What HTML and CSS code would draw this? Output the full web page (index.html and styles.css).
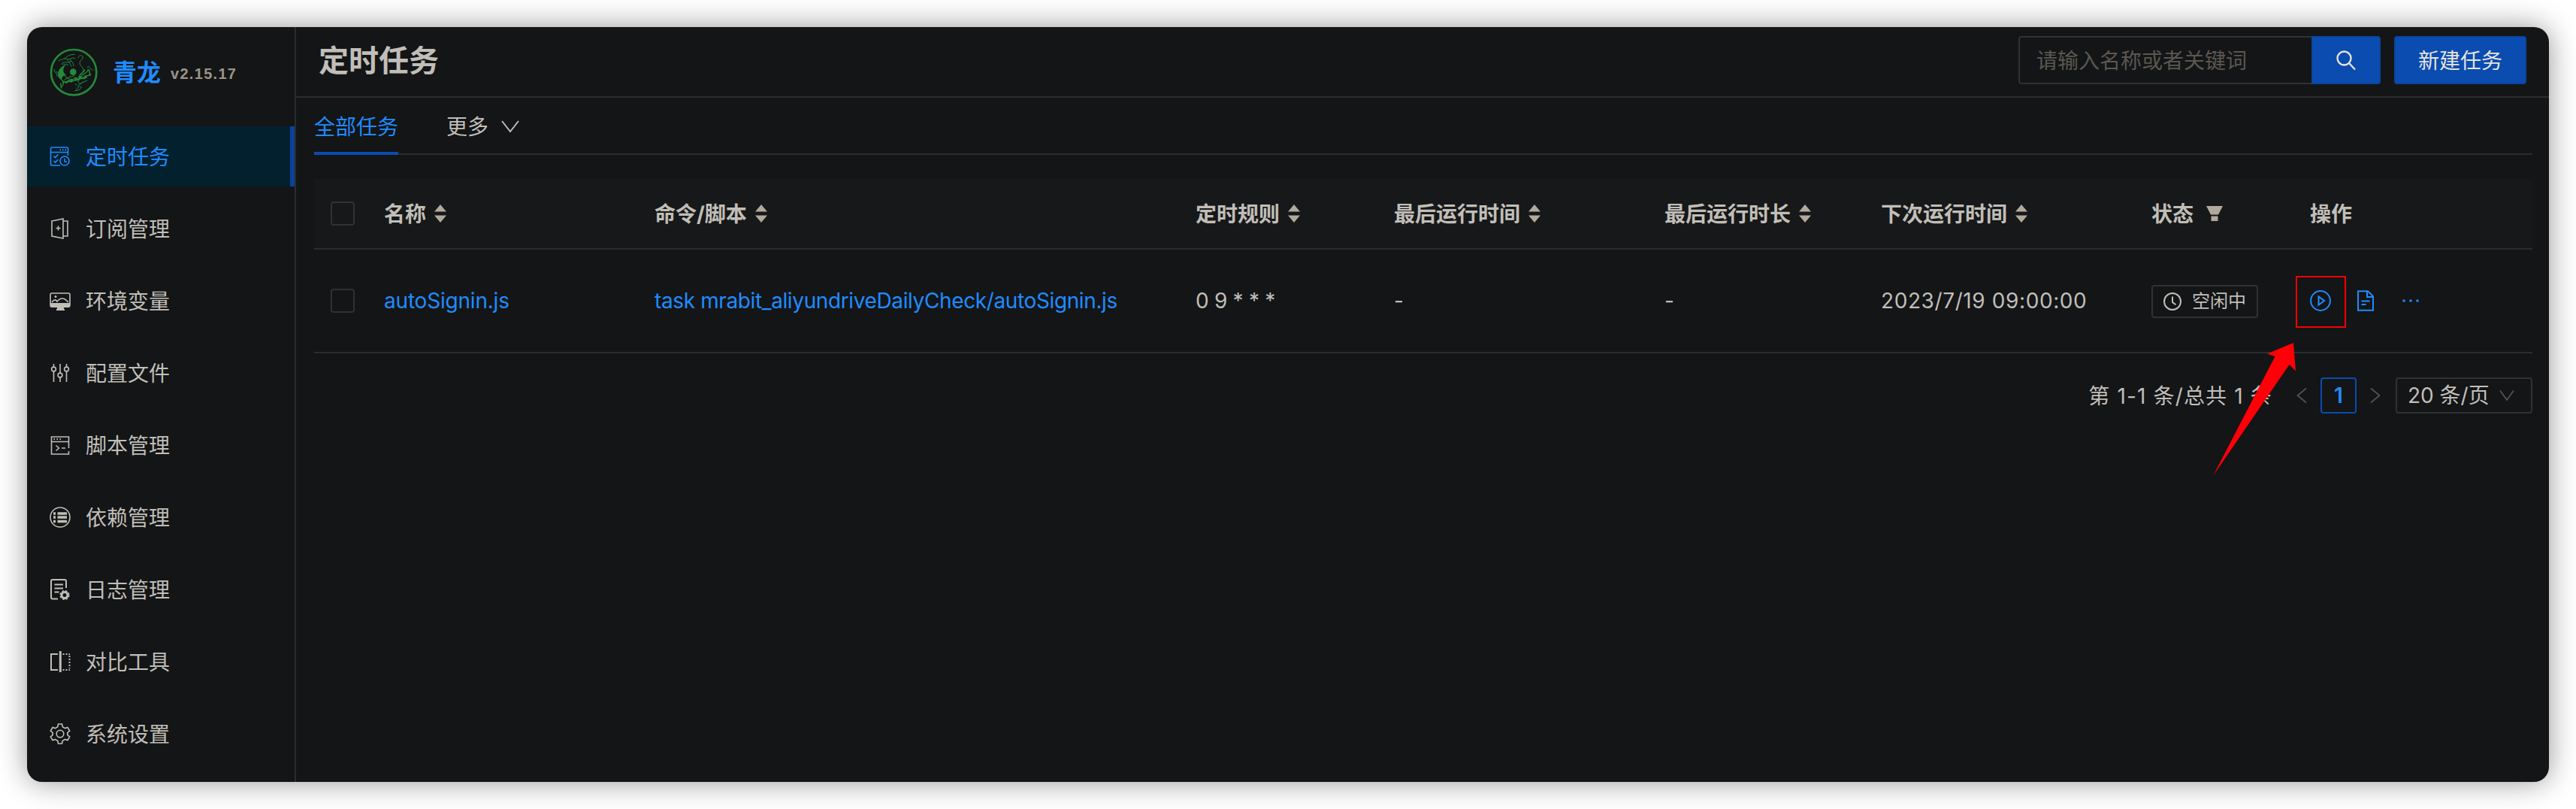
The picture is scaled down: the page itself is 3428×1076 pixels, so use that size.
FILE: index.html
```html
<!DOCTYPE html>
<html lang="zh-CN">
<head>
<meta charset="utf-8">
<title>定时任务</title>
<link rel="stylesheet" href="styles.css">
</head>
<body>
<div class="window">
  <aside class="sidebar">
    <div class="brand">
      <svg class="logo" viewBox="48 41 192 192" stroke-linecap="round" stroke-linejoin="round">
        <circle class="w8" cx="144.500" cy="137.500" r="90.500"/>
        <circle class="fill" cx="142" cy="136" r="13"/>
        <path class="fill" d="M112 108c-12 4-24 13-29 27c-5 15 1 28 11 32c4-12 10-18 21-19c-9-5-13-12-12-21c1-8 5-13 9-19z"/>
        <path class="w5" d="M94 164c6 6 11 14 7 25c-2 5-4 6-7 6M92 182l3 18M102 180l5-8"/>
        <path d="M66 126c0 7 2 12 9 15l4 12M82 140l-8-6"/>
        <path d="M84 91c12-7 21-4 29-13c9-7 20-13 34-12M106 83c14 2 23 4 33-3l11 2M99 98c14-2 20 4 35-5M118 88c12 8 11 18 18 27M128 84c6 9 16 15 16 28M96 104c12-1 17 5 26 4"/>
        <path d="M162 80c1-12 17-13 19-3c1 9-14 13-13 25c1 9 15 14 15 27c0 9-8 17-15 19"/>
        <path class="w5" d="M169 148c6-8 16-12 19-20M177 149c12-8 23-11 24-21M190 151c8 2 17-2 22-6M205 127l5 23"/>
        <path d="M199 119c-1-7 10-8 9 1c2 5 7 3 14 10"/>
        <path class="fill" d="M120 171l10-9l9 3l9-8l11 2l9-9l14 4l13-2l4 7l-13 6l-12-1l-12 7l-16 1l-11 6l-9-2l-14 7l-6-7z"/>
        <path d="M111 155c8 6 12 10 22 13M108 166c10-2 12-7 22-11M125 157l22-6M104 146l13 14"/>
        <path class="cut" d="M127 168l4-4M143 168l5-5M159 162l5-4M177 157l6-1"/>
        <path d="M164 172c-4 9 3 13 12 8l22-10M180 176c-5 10-17 8-17 19c-2 8-9 10-13 16c9-2 17-1 22-9M158 189l-8-5M168 194l8 4"/>
      </svg>
      <span class="brand-name">青龙</span><span class="version">v2.15.17</span>
    </div>
    <nav class="menu">
      <a class="item active">
        <svg class="icon" viewBox="0 0 28 28"><path d="M24.500 13V4a2 2 0 0 0-2-2h-19a2 2 0 0 0-2 2v20a2 2 0 0 0 2 2H14M2 8.500h22M5.500 13.500l2 2 4-4M5.500 20l2 2 4-4M20 17v4h3" /><circle cx="20" cy="20" r="6"/><path class="thick" d="M13.500 5.300h1.500M17 5.300h1.500M20.500 5.300h1.500"/></svg>
        <span>定时任务</span></a>
      <a class="item">
        <svg class="icon" viewBox="0 0 28 28"><path d="M3 4l15-3v26l-15-3zM18 4h6v20h-6M8.500 13.500h6M11.500 10.500v6"/></svg>
        <span>订阅管理</span></a>
      <a class="item">
        <svg class="icon" viewBox="0 0 28 28"><rect x="1" y="4" width="26" height="18" rx="2"/><path class="solid" d="M1 17h26v4a2 2 0 0 1-2 2h-6v2h1v2H9v-2h1v-2H3a2 2 0 0 1-2-2z"/><circle class="solid" cx="8" cy="8.500" r="1.500"/><path d="M3 16c3-4 5-4 7-1 4-5 9-6 15 1"/></svg>
        <span>环境变量</span></a>
      <a class="item">
        <svg class="icon" viewBox="0 0 28 28"><path d="M5.500 2v4M5.500 12v14M14 2v12M14 20v6M22.500 2v4M22.500 12v14"/><circle cx="5.500" cy="9" r="2.900"/><circle cx="14" cy="17" r="2.900"/><circle cx="22.500" cy="9" r="2.900"/></svg>
        <span>配置文件</span></a>
      <a class="item">
        <svg class="icon" viewBox="0 0 28 28"><path d="M25.500 18V3h-23v23h23v-4M2.500 9.500h23M8.500 14.500l4 3.500-4 3.500M16 18h5"/><path class="thick" d="M5.500 6h1.500M9.500 6h1.500M13.500 6h1.500"/></svg>
        <span>脚本管理</span></a>
      <a class="item">
        <svg class="icon" viewBox="0 0 28 28"><circle cx="14" cy="14" r="13"/><path class="bar" d="M5 9h3M10.500 9h12.500M5 14h3M10.500 14h12.500M5 19.500h3M10.500 19.500h12.500"/></svg>
        <span>依赖管理</span></a>
      <a class="item">
        <svg class="icon" viewBox="0 0 28 28"><path class="mid" d="M22 12V3a2 2 0 0 0-2-2H4a2 2 0 0 0-2 2v21.500a2 2 0 0 0 2 2h7M6.500 7.500h11.500M6.500 12.500h11.500M6.500 17.500h6"/><circle class="hub" cx="20" cy="21.500" r="4"/><circle cx="20" cy="21.500" r="5.800" stroke-dasharray="2.600 2"/></svg>
        <span>日志管理</span></a>
      <a class="item">
        <svg class="icon" viewBox="0 0 28 28"><path class="mid" d="M11 4H2v21h9"/><path class="hub" d="M14.300 0v28"/><path class="mid" d="M17.500 4h9.500M17.500 25h9.500M26.500 6v17" stroke-dasharray="2 2"/></svg>
        <span>对比工具</span></a>
      <a class="item">
        <svg class="icon" viewBox="0 0 28 28"><path d="M11.500 1h5l.8 3.800 3.200 1.800 3.500-1.100 2.700 4.500-2.800 2.300v3.400l2.800 2.300-2.700 4.500-3.500-1.100-3.200 1.800-.8 3.800h-5l-.8-3.800-3.200-1.800-3.500 1.100L1.300 18l2.800-2.300v-3.400L1.300 10 4 5.500l3.500 1.100 3.200-1.800z"/><circle cx="14" cy="14" r="4.800"/></svg>
        <span>系统设置</span></a>
    </nav>
  </aside>

  <main class="main">
    <header class="header">
      <h1>定时任务</h1>
      <div class="tools">
        <div class="search">
          <div class="field">请输入名称或者关键词</div>
          <button class="primary search-btn"><svg width="28" height="28" viewBox="0 0 28 28"><circle cx="11.500" cy="11.500" r="9" /><path d="M18 18l8 8.500"/></svg></button>
        </div>
        <button class="primary new-btn">新建任务</button>
      </div>
    </header>
    <div class="content">
      <div class="tabs">
        <div class="tab current">全部任务</div>
        <div class="tab">更多<svg class="tab-arrow" width="28" height="28" viewBox="0 0 28 28"><path d="M3 6l11 14L25 6"/></svg></div>
      </div>
      <table>
        <colgroup><col class="c-check"><col class="c-name"><col class="c-cmd"><col class="c-rule"><col class="c-last"><col class="c-dur"><col class="c-next"><col class="c-state"><col></colgroup>
        <thead><tr>
          <th class="check"><i class="box"></i></th>
          <th>名称<svg class="sort" viewBox="0 0 16 24"><path d="M0 9.500L8 0l8 9.500zM0 14.500L8 24l8-9.500z"/></svg></th>
          <th>命令/脚本<svg class="sort" viewBox="0 0 16 24"><path d="M0 9.500L8 0l8 9.500zM0 14.500L8 24l8-9.500z"/></svg></th>
          <th>定时规则<svg class="sort" viewBox="0 0 16 24"><path d="M0 9.500L8 0l8 9.500zM0 14.500L8 24l8-9.500z"/></svg></th>
          <th>最后运行时间<svg class="sort" viewBox="0 0 16 24"><path d="M0 9.500L8 0l8 9.500zM0 14.500L8 24l8-9.500z"/></svg></th>
          <th>最后运行时长<svg class="sort" viewBox="0 0 16 24"><path d="M0 9.500L8 0l8 9.500zM0 14.500L8 24l8-9.500z"/></svg></th>
          <th>下次运行时间<svg class="sort" viewBox="0 0 16 24"><path d="M0 9.500L8 0l8 9.500zM0 14.500L8 24l8-9.500z"/></svg></th>
          <th>状态<svg class="filter" viewBox="0 0 22 20"><path d="M0 0h22l-6 11.500H6zM6.500 13.500h9v6.500h-9z"/></svg></th>
          <th class="ops-head">操作</th>
        </tr></thead>
        <tbody><tr>
          <td class="check"><i class="box"></i></td>
          <td><a class="name">autoSignin.js</a></td>
          <td><a class="cmd">task mrabit_aliyundriveDailyCheck/autoSignin.js</a></td>
          <td><span class="rule">0 9 * * *</span></td>
          <td>-</td>
          <td>-</td>
          <td><span class="date">2023/7/19 09:00:00</span></td>
          <td><span class="tag"><svg width="24" height="24" viewBox="0 0 24 24"><circle cx="12" cy="12" r="11"/><path d="M12 5.500V13l4.500 3.300"/></svg>空闲中</span></td>
          <td class="ops-cell"><div class="ops">
            <svg width="28" height="28" viewBox="0 0 28 28"><circle cx="14" cy="14" r="12.900"/><path d="M11.500 8.500v11l7.500-5.500z"/></svg>
            <svg width="28" height="28" viewBox="0 0 28 28"><path d="M4 1.200h13l7 7v18.600H4zM16 1.500V9h7.500M8.500 14.500h11M8.500 19h6"/></svg>
            <svg class="dots" width="28" height="28" viewBox="0 0 28 28"><circle cx="5" cy="14" r="1.800"/><circle cx="14" cy="14" r="1.800"/><circle cx="23" cy="14" r="1.800"/></svg>
          </div></td>
        </tr></tbody>
      </table>
      <div class="pager">
        <span class="total">第 1-1 条/总共 1 条</span>
        <svg class="prev" width="14" height="22" viewBox="0 0 14 22"><path d="M13 1.500L1.500 11 13 20.500"/></svg>
        <span class="page">1</span>
        <svg class="next" width="14" height="22" viewBox="0 0 14 22"><path d="M1 1.500L12.500 11 1 20.500"/></svg>
        <span class="size">20 条/页<svg width="20" height="16" viewBox="0 0 20 16"><path d="M1 1.500l9 12.500 9-12.500"/></svg></span>
      </div>
    </div>
  </main>
</div>
<div class="mark"></div>
<svg class="pointer" width="112" height="180" viewBox="0 0 112 180"><path d="M107 1L72 15.500l10.500 3.500L0 178 101.500 30l8.500 8.500z"/></svg>
</body>
</html>
```
FILE: styles.css
```css
* { box-sizing: border-box; }
body {
  margin: 0;
  padding: 36px;
  background: #fff;
  color: #c1beb8;
  font: 28px/44px Inter, "Noto Sans CJK SC", sans-serif;
}
svg { flex: none; fill: none; stroke: currentColor; stroke-width: 2; }
.window {
  display: flex;
  width: 3356px;
  height: 1004px;
  overflow: hidden;
  background: #131517;
  border-radius: 20px;
  box-shadow: 0 0 38px rgba(0, 0, 0, .42);
}

/* Sidebar */
.sidebar { width: 358px; flex: none; border-right: 2px solid #2a2c2e; }
.brand { display: flex; align-items: center; height: 132px; padding: 0 0 12px 30px; }
.logo { width: 64px; height: 64px; color: #25893a; stroke-width: 3; }
.logo .w8 { stroke-width: 8; }
.logo .w5 { stroke-width: 4.5; }
.logo .fill { fill: currentColor; stroke: none; }
.logo .cut { stroke: #131517; }
.brand-name { margin-left: 20px; padding-top: 2px; color: #1f8cff; font-size: 32px; font-weight: 700; }
.version {
  margin: 4px 0 0 13px;
  color: #9d9488;
  font: 700 20px/28px "Liberation Sans", sans-serif;
  letter-spacing: 1.3px;
}
.menu { display: flex; flex-direction: column; gap: 16px; }
.item { display: flex; align-items: center; gap: 20px; height: 80px; padding-left: 30px; }
.item span { padding-top: 2px; }
.item.active { color: #1f8cff; background: #03202f; border-right: 6px solid #0a4397; }
.icon { width: 28px; height: 28px; stroke-width: 1.6; }
.icon .thick { stroke-width: 2; }
.icon .mid { stroke-width: 2; }
.icon .hub { stroke-width: 3; }
.icon .bar { stroke-width: 3.4; }
.icon .solid { fill: currentColor; stroke: none; }

/* Header */
.main { flex: 1; min-width: 0; }
.header {
  display: flex;
  align-items: center;
  justify-content: space-between;
  height: 94px;
  padding: 0 30px 4px;
  border-bottom: 2px solid #2a2c2e;
}
h1 { margin: 0; padding-top: 2px; font-size: 40px; line-height: 60px; font-weight: 700; }
.tools, .search { display: flex; }
.tools { gap: 18px; }
.field {
  width: 390px;
  height: 64px;
  padding: 9px 22px 0;
  border: 2px solid #2f3133;
  border-right: 0;
  border-radius: 4px 0 0 4px;
  color: #5b5750;
}
.primary {
  display: flex;
  align-items: center;
  justify-content: center;
  height: 64px;
  padding: 0;
  background: #0a4cb0;
  border: 2px solid #0a469f;
  border-radius: 4px;
  color: #e6e3dd;
  font: inherit;
}
.search-btn { width: 92px; border-radius: 0 4px 4px 0; }
.search-btn svg { stroke-width: 2.4; }
.new-btn { width: 176px; padding-top: 1px; }

/* Tabs */
.content { padding: 0 22px 0 24px; }
.tabs { display: flex; gap: 64px; height: 76px; margin-bottom: 32px; border-bottom: 2px solid #2a2c2e; }
.tab { display: flex; align-items: center; height: 76px; padding-top: 2px; }
.tab.current { color: #1f8cff; border-bottom: 4px solid #0a4cb0; padding-top: 6px; }
.tab-arrow { margin-left: 15px; }

/* Task table */
table { width: 2952px; table-layout: fixed; border-collapse: separate; border-spacing: 0; }
.c-check { width: 76px; }
.c-name, .c-last { width: 360px; }
.c-cmd { width: 720px; }
.c-rule { width: 264px; }
.c-dur { width: 288px; }
.c-next { width: 360px; }
.c-state { width: 210px; }
th, td { padding: 0 16px 0 17px; text-align: left; border-bottom: 2px solid #2a2c2e; vertical-align: middle; }
th { height: 94px; padding-top: 2px; background: #161819; font-weight: 700; }
td { height: 138px; }
th.check, td.check { padding: 0 0 0 22px; }
.box { display: block; width: 32px; height: 32px; border: 2px solid #2f3133; border-radius: 4px; }
.sort { width: 16px; height: 24px; margin-left: 11px; vertical-align: -1px; }
.filter { width: 22px; height: 20px; margin-left: 17px; vertical-align: 1px; }
.sort, .filter { fill: #b2a99d; stroke: none; }
.ops-head { padding-left: 18px; }
.name, .cmd, .ops { color: #1f8cff; }
.name { letter-spacing: -.2px; }
.cmd { letter-spacing: -.38px; }
.rule { letter-spacing: -.3px; }
.date { letter-spacing: .6px; }
.tag {
  display: inline-flex;
  align-items: center;
  gap: 14px;
  width: 142px;
  height: 44px;
  padding-left: 14px;
  border: 2px solid #2f3133;
  border-radius: 4px;
  font-size: 24px;
  vertical-align: middle;
}
td.ops-cell { padding-left: 16px; }
.ops { display: flex; gap: 32px; padding-left: 2px; }
.ops .dots { fill: currentColor; stroke: none; }

/* Pagination */
.pager { display: flex; align-items: center; justify-content: flex-end; height: 48px; margin-top: 32px; }
.prev, .next { color: #55524d; stroke-width: 1.8; }
.total { margin-right: 32px; padding-top: 1px; letter-spacing: 1.15px; }
.page {
  width: 48px;
  height: 48px;
  margin: 0 18px;
  border: 2px solid #0a4cb0;
  border-radius: 4px;
  color: #1f8cff;
  font-weight: 600;
  text-align: center;
}
.size {
  display: flex;
  align-items: center;
  justify-content: space-between;
  width: 182px;
  height: 48px;
  margin-left: 20px;
  padding: 0 22px 0 14px;
  border: 2px solid #2f3133;
  border-radius: 4px;
}
.size svg { color: #55524d; stroke-width: 1.8; }

/* Callout drawn over the run button */
.mark { position: absolute; left: 3055px; top: 367px; width: 67px; height: 69px; border: 2px solid #f80000; }
.pointer { position: absolute; left: 2945px; top: 455px; fill: #ff0008; stroke: none; }
```
